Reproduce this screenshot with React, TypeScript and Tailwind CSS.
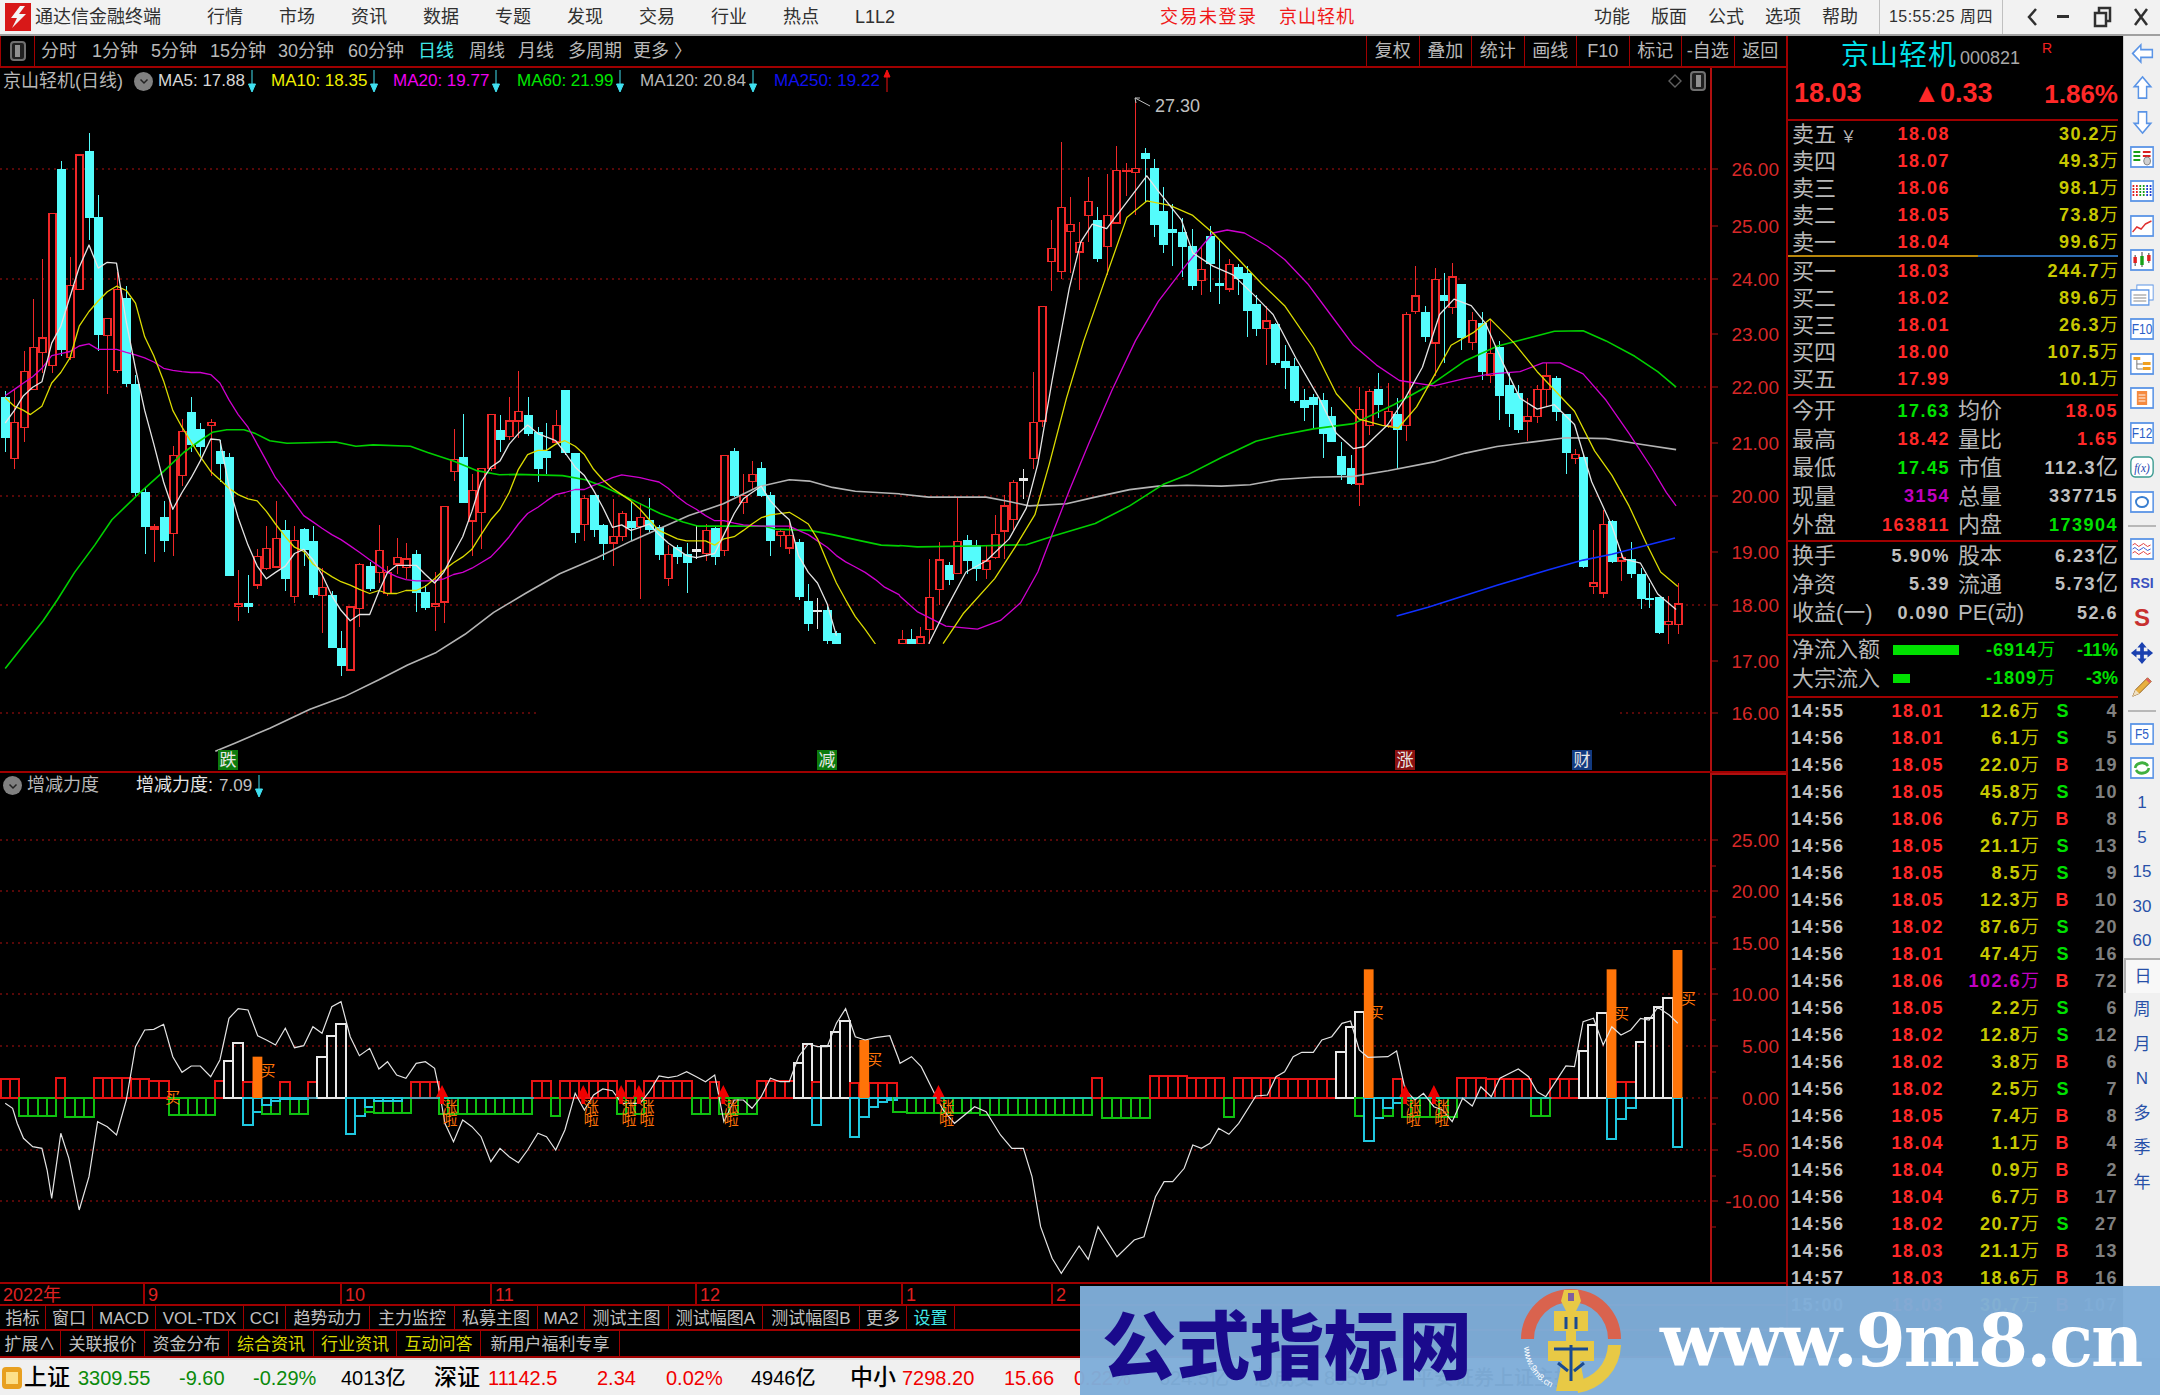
import React from 'react';

type Candle = [number, 'u' | 'd' | 'w', number, number, number, number];

// coordinates read off the left half of the chart
const candlesA: Candle[] = [
  [9,'d',645,660,755,790],[25,'u',640,718,805,830],[41,'u',550,597,730,765],[57,'u',425,540,640,640],[73,'u',330,518,552,600],
  [90,'u',222,222,583,600],[106,'d',97,118,545,560],[122,'u',325,393,565,570],[138,'u',83,83,402,402],[155,'d',32,75,232,285],
  [171,'d',178,232,510,550],[187,'u',470,472,512,650],[203,'u',360,403,595,600],[220,'d',395,425,625,635],[236,'d',605,628,885,895],
  [252,'d',875,885,965,1030],[268,'u',960,967,972,1050],[285,'d',905,945,998,1027],[301,'u',775,797,983,1035],[317,'u',710,740,845,870],
  [333,'d',657,695,770,790],[349,'d',720,735,775,800],[367,'u',710,718,726,845],[383,'d',760,788,815,860],[399,'d',792,803,1083,1083],
  [415,'u',1070,1150,1155,1190],[432,'d',1080,1148,1156,1172],[448,'u',1020,1038,1105,1115],[464,'u',965,1018,1065,1070],[480,'u',905,995,1062,1065],
  [497,'d',950,975,1090,1118],[513,'u',965,1000,1133,1148],[529,'d',970,973,1020,1060],[545,'d',965,1002,1127,1135],[561,'u',1065,1110,1130,1218],
  [578,'d',1120,1130,1252,1255],[594,'d',1215,1255,1297,1322],[610,'u',1155,1157,1307,1307],[626,'u',1052,1056,1160,1205],[644,'d',1050,1060,1112,1120],
  [660,'u',963,1022,1075,1100],[675,'u',1060,1075,1125,1130],[691,'u',993,1040,1055,1078],[707,'u',1005,1043,1063,1090],[725,'d',1022,1032,1122,1168],
  [741,'d',1105,1123,1158,1165],[757,'u',1075,1150,1155,1215],[773,'u',917,918,1145,1195],[790,'u',735,807,835,858],[806,'d',698,803,908,908],
  [822,'u',840,880,953,1035],[838,'u',828,828,933,1020],[855,'u',700,700,828,835],[871,'d',700,738,758,788],[887,'u',657,715,752,760],
  [903,'u',597,692,715,755],[919,'d',657,703,745,750],[937,'d',730,742,827,860],[952,'d',720,788,802,842],[968,'u',690,725,765,770],
  [984,'d',642,642,790,795],[1002,'d',793,793,980,1005],[1018,'u',890,900,962,1000],[1034,'d',890,892,972,990],[1050,'d',960,963,1005,1045],
  [1067,'u',900,990,1005,1060],[1083,'u',930,935,990,1000],[1099,'d',905,955,968,1000],[1115,'u',910,945,965,1137],[1131,'d',898,952,972,980],
  [1148,'d',962,968,1032,1045],[1164,'u',1010,1032,1090,1108],[1180,'d',1010,1016,1038,1055],[1196,'d',1005,1033,1050,1125],[1213,'w',965,1020,1024,1042],
  [1229,'u',960,975,1030,1048],[1245,'d',965,972,1037,1058],[1261,'u',795,797,1022,1037],[1279,'d',780,788,893,895],[1295,'u',840,892,908,935],
  [1310,'u',810,843,858,880],[1326,'d',813,828,893,895],[1342,'d',885,893,998,1037],[1359,'u',975,978,987,1015],[1375,'u',955,988,1017,1032],
  [1391,'d',995,1005,1133,1140],[1408,'d',1102,1145,1195,1215],[1424,'w',1135,1166,1168,1210],[1441,'d',1153,1165,1237,1245],[1457,'d',1215,1220,1245,1245],
];

// right half, different crop so different scale
const candlesB: Candle[] = [
  [3,'u',1228,1248,1258,1258],[19,'d',1225,1248,1258,1258],[35,'u',1220,1243,1258,1258],[51,'u',1065,1153,1226,1258],[68,'u',1028,1068,1135,1170],
  [85,'d',1072,1080,1112,1125],[100,'u',925,1025,1098,1100],[116,'d',1010,1024,1068,1100],[132,'d',1022,1035,1087,1115],[149,'u',1035,1070,1090,1110],
  [165,'u',965,1010,1062,1065],[181,'u',920,945,1002,1065],[197,'u',885,892,975,1000],[215,'w',860,884,886,930],[232,'u',640,755,838,860],
  [247,'u',492,492,752,765],[263,'u',295,360,390,457],[280,'u',118,267,412,430],[296,'u',242,305,322,415],[312,'u',300,347,368,455],
  [328,'u',198,254,285,345],[344,'d',265,297,383,390],[361,'u',190,285,355,420],[377,'u',127,182,302,305],[393,'u',165,182,186,240],
  [409,'u',22,178,188,285],[427,'d',132,144,156,255],[442,'d',157,178,306,335],[458,'d',220,277,350,370],[474,'d',260,318,323,400],
  [492,'d',290,325,355,425],[509,'d',315,355,445,455],[524,'u',355,408,433,465],[540,'d',310,333,395,460],[556,'d',340,440,445,487],
  [573,'u',385,397,452,460],[589,'d',395,403,428,465],[605,'d',400,418,500,562],[621,'d',465,488,542,560],[638,'u',490,525,542,625],
  [654,'d',530,533,618,625],[670,'d',580,618,630,680],[686,'d',610,628,705,710],[704,'d',680,706,722,752],[720,'d',690,700,715,770],
  [736,'d',688,705,780,835],[751,'d',720,742,798,800],[768,'d',800,834,873,887],[785,'d',830,860,893,897],[800,'u',675,725,895,945],
  [817,'u',680,685,762,783],[833,'d',642,680,715,745],[850,'u',665,730,762,768],[866,'d',700,737,770,860],[882,'u',505,510,762,797],
  [898,'u',400,468,503,510],[915,'d',490,505,560,573],[932,'u',405,430,575,650],[947,'d',415,467,478,620],[962,'u',393,425,495,510],
  [978,'d',440,443,562,590],[996,'u',505,523,573,590],[1013,'d',505,530,640,660],[1028,'u',520,598,648,665],[1044,'d',570,586,695,750],
  [1061,'d',640,672,735,765],[1077,'d',670,690,770,780],[1093,'u',700,742,752,797],[1109,'u',670,680,742,757],[1125,'u',620,650,680,720],
  [1143,'d',650,655,730,752],[1160,'d',735,737,823,872],[1175,'u',815,828,838,850],[1190,'d',830,836,1083,1085],[1208,'u',1000,1120,1128,1145],
  [1224,'u',955,987,1143,1155],[1240,'d',978,980,1070,1075],[1256,'u',1050,1062,1070,1115],[1273,'d',1028,1068,1098,1108],[1290,'d',1085,1100,1155,1180],
  [1305,'d',1120,1155,1158,1178],[1322,'d',1152,1153,1233,1237],[1338,'u',1150,1208,1215,1258],[1355,'u',1120,1168,1215,1237],
];

const ax = (x: number) => x / 1.742;
const ay = (y: number) => 120 + y / 2.376;
const bx = (x: number) => 900 + x / 1.742;
const by = (y: number) => 90 + y / 2.272;
const cy = (y: number) => 770 + y / 3;

const pts = (a: number[], fx: (n: number) => number, fy: (n: number) => number) => {
  const out: string[] = [];
  for (let i = 0; i < a.length; i += 2) out.push(`${fx(a[i]).toFixed(1)},${fy(a[i + 1]).toFixed(1)}`);
  return out.join(' ');
};

const ma5a = pts([9,720,25,690,41,655,57,635,73,622,90,530,106,490,122,420,138,350,155,297,171,352,187,338,203,340,220,480,236,590,252,690,268,770,285,860,301,925,317,885,333,850,349,810,367,758,383,760,399,870,415,945,432,1010,448,1060,464,1090,480,1075,497,1060,513,1030,529,1020,545,1045,561,1080,578,1130,594,1165,610,1190,626,1175,644,1175,660,1120,675,1075,691,1058,725,1058,741,1080,757,1100,773,1075,790,1030,806,990,822,930,838,860,855,825,871,810,887,770,903,745,919,725,937,745,968,762,984,790,1002,825,1018,845,1034,880,1050,920,1067,968,1083,962,1099,975,1115,968,1131,960,1148,985,1164,1005,1180,1020,1196,1035,1213,1040,1245,1030,1261,985,1279,935,1295,900,1310,885,1326,870,1342,905,1359,930,1375,950,1391,1035,1408,1075,1424,1100,1441,1150,1457,1225], ax, ay);
const ma5b = pts([50,1258,80,1180,115,1095,150,1070,190,1020,220,950,240,850,265,660,295,450,315,345,335,305,360,315,395,255,430,195,450,230,490,295,510,370,545,400,580,420,620,470,650,510,690,610,730,700,760,780,790,815,810,810,850,760,880,700,910,630,940,510,965,475,995,490,1020,530,1050,620,1080,700,1110,725,1140,715,1175,760,1205,890,1240,990,1260,1065,1290,1075,1320,1145,1352,1180], bx, by);

const ma10a = pts([9,660,25,680,41,690,53,700,73,680,90,625,106,600,122,565,138,490,155,455,171,430,187,408,203,395,220,405,236,435,252,515,268,560,285,620,301,690,317,730,333,765,349,800,367,835,383,855,399,875,415,890,432,900,448,905,464,930,480,960,497,990,513,1015,529,1025,545,1055,561,1070,578,1085,594,1097,610,1105,626,1115,644,1125,660,1118,675,1125,691,1125,707,1118,725,1118,741,1108,757,1090,773,1070,790,1052,806,1038,822,1020,838,985,855,950,871,925,887,885,903,830,919,795,937,785,952,785,968,770,984,762,1002,775,1018,795,1034,830,1050,855,1067,875,1083,890,1099,905,1115,925,1131,950,1148,975,1164,985,1180,995,1196,1000,1229,1000,1245,1010,1261,995,1279,990,1295,975,1310,960,1326,945,1342,938,1375,932,1391,945,1408,960,1424,995,1441,1050,1457,1100,1473,1140,1490,1180,1507,1210,1525,1245], ax, ay);
const ma10b = pts([75,1258,110,1190,165,1110,200,1040,235,965,260,850,290,700,320,570,360,420,395,290,430,252,470,262,510,285,545,325,590,385,630,440,670,490,720,585,760,690,800,748,840,762,868,768,900,720,930,650,960,580,1000,550,1028,520,1070,575,1110,640,1175,730,1210,820,1240,875,1270,945,1300,1030,1325,1095,1355,1128], bx, by);

const ma20 = pts([9,655,25,640,41,625,57,610,73,590,90,560,106,555,122,550,138,537,155,532,171,545,187,545,203,545,220,552,236,558,252,565,268,575,285,590,301,595,317,598,333,600,349,600,367,605,383,625,399,665,415,700,432,730,448,770,464,810,480,850,497,880,513,910,529,940,545,955,561,970,578,985,594,997,610,1012,626,1027,644,1045,660,1060,675,1075,691,1085,707,1092,725,1095,757,1095,773,1090,790,1080,806,1075,822,1065,838,1052,855,1038,871,1015,887,990,903,960,919,935,937,920,952,905,968,890,984,885,1002,878,1018,878,1034,868,1050,860,1067,850,1083,843,1115,850,1131,855,1148,860,1164,875,1180,895,1196,912,1213,925,1229,940,1245,952,1261,952,1279,958,1295,962,1326,965,1359,965,1375,965,1391,975,1408,985,1424,1000,1441,1015,1457,1035,1473,1050,1490,1062,1507,1075,1525,1092,1541,1110,1566,1128], ax, ay)
  + ' ' + pts([0,1150,30,1185,80,1218,135,1225,175,1205,210,1165,240,1095,265,1010,295,910,330,800,370,680,410,570,450,480,500,395,545,325,570,318,600,325,640,355,670,385,710,440,750,510,790,580,830,625,870,660,930,672,985,655,1030,645,1080,640,1120,620,1150,620,1190,645,1230,705,1270,780,1310,860,1335,915,1352,945], bx, by);

const ma60 = pts([9,1303,40,1250,75,1190,100,1140,130,1075,165,1010,195,950,240,890,285,835,320,790,345,765,370,742,395,736,425,736,445,745,470,762,500,768,585,765,620,775,650,772,715,775,745,790,790,810,830,833,870,843,900,842,980,845,1020,855,1050,870,1090,895,1120,915,1150,935,1190,955,1215,965,1330,965,1350,972,1410,975,1450,985,1500,1000,1535,1010,1566,1012], ax, ay)
  + ' ' + pts([0,1035,30,1038,130,1036,220,1033,270,1012,340,985,400,945,460,895,500,875,560,835,620,798,660,785,720,770,790,758,860,715,930,665,985,615,1040,582,1090,565,1140,548,1190,547,1230,570,1280,605,1320,640,1352,675], bx, by);

const ma120 = pts([375,1500,410,1480,470,1445,540,1400,600,1370,660,1330,710,1295,760,1265,810,1222,860,1170,915,1125,975,1078,1040,1040,1100,1000,1150,970,1200,940,1260,912,1320,872,1375,855,1410,858,1450,873,1490,882,1566,888], ax, ay)
  + ' ' + pts([0,918,50,925,150,925,190,935,225,945,290,940,340,925,400,908,450,900,500,898,560,900,610,897,660,885,720,880,790,878,850,865,930,845,985,825,1040,810,1100,800,1160,790,1230,792,1290,805,1352,817], bx, by);

const ma250 = pts([865,1195,920,1175,1040,1125,1130,1090,1190,1068,1240,1055,1350,1018], bx, by);

const powerLine = pts([9,1000,22,1015,30,1060,41,1105,57,1130,73,1135,82,1200,90,1285,106,1090,120,1165,138,1320,155,1220,170,1055,187,1070,203,1095,220,990,236,830,252,780,268,778,285,763,301,860,317,907,333,888,349,888,367,920,383,870,399,745,415,716,432,720,449,797,464,810,480,825,497,775,513,833,529,827,545,770,561,790,578,710,594,695,610,800,626,857,644,835,660,897,675,875,691,915,707,925,725,880,741,875,757,895,765,960,775,1060,790,1115,806,1050,822,1070,838,1100,855,1175,871,1135,887,1160,903,1178,919,1140,937,1090,952,1100,968,1140,984,1080,1002,970,1018,1020,1034,975,1050,957,1067,962,1083,1000,1099,1000,1115,1000,1131,965,1148,918,1164,923,1180,918,1196,905,1213,920,1229,935,1245,915,1261,1055,1279,990,1295,990,1310,1015,1326,980,1342,925,1359,935,1375,935,1391,860,1408,822,1424,830,1441,830,1457,760,1473,716,1490,800,1507,810,1525,803,1550,797,1566,870], ax, cy)
  + ' ' + pts([0,880,20,860,37,890,60,970,75,1020,95,1060,130,1010,150,1025,175,1095,195,1135,215,1135,230,1220,245,1370,265,1465,281,1510,312,1428,328,1468,345,1370,378,1460,408,1410,425,1400,445,1280,460,1235,475,1235,495,1195,510,1125,525,1135,540,1120,555,1075,573,1093,590,1060,620,978,640,975,655,920,670,905,685,860,700,847,720,847,735,810,752,800,770,760,785,753,800,840,815,862,850,860,865,843,880,960,897,990,912,970,930,1010,945,1020,962,1055,980,985,997,1008,1012,950,1030,980,1045,925,1077,897,1095,920,1110,965,1125,980,1160,888,1175,890,1190,755,1208,745,1225,825,1240,770,1256,795,1273,780,1290,745,1305,750,1320,712,1340,735,1355,760], bx, cy);

type Run = [number, number, number, string, number];
const RED = '#e81414';
const GRN = '#10c010';
const CYN = '#20c8e0';
const WHT = '#e8e8e8';
const ORG = '#ff7408';

// x0, x1, bar count, colour, far end of the bar
const barsA: Run[] = [
  [1,33,2,RED,928],[33,98,4,GRN,1038],[98,114,1,RED,923],[114,163,3,GRN,1040],[163,228,4,RED,923],[228,260,2,RED,928],[260,295,2,RED,932],
  [295,375,5,GRN,1035],[375,390,1,RED,932],[390,406,1,WHT,873],[406,423,1,WHT,820],[423,440,1,RED,937],[423,440,1,CYN,1065],
  [440,457,1,CYN,1025],[457,488,2,GRN,1033],[457,472,1,CYN,1005],[472,488,1,CYN,993],[488,505,1,RED,937],[488,505,1,CYN,988],[505,537,2,GRN,1033],[505,537,2,CYN,988],
  [537,553,1,RED,937],[553,570,1,WHT,860],[570,586,1,WHT,797],[586,603,1,WHT,762],[603,618,1,CYN,1092],[618,635,1,CYN,1037],[635,652,1,GRN,1027],[635,652,1,CYN,1010],
  [652,716,4,GRN,1028],[652,700,3,CYN,992],[716,765,3,RED,937],[765,927,10,GRN,1033],[927,960,2,RED,932],[960,976,1,GRN,1037],[976,1075,6,RED,932],
  [1075,1090,1,GRN,1033],[1090,1106,1,RED,932],[1106,1122,1,GRN,1033],[1122,1205,5,RED,932],[1205,1237,2,GRN,1033],[1237,1253,1,RED,937],[1253,1318,4,GRN,1033],
  [1318,1383,4,RED,932],[1383,1399,1,WHT,878],[1399,1415,1,WHT,822],[1415,1431,1,RED,937],[1415,1431,1,CYN,1065],[1431,1448,1,WHT,828],[1448,1464,1,WHT,785],[1464,1480,1,WHT,752],
  [1480,1497,1,RED,940],[1480,1497,1,CYN,1100],[1497,1514,1,CYN,1042],[1514,1530,1,RED,940],[1514,1530,1,CYN,1010],[1530,1546,1,RED,940],[1530,1546,1,CYN,997],[1546,1562,1,RED,940],[1546,1562,1,CYN,990],
];
const barsB: Run[] = [
  [-12,12,1,GRN,1025],[12,140,8,GRN,1028],[140,335,12,GRN,1035],[335,352,1,RED,923],[352,435,5,GRN,1045],[435,500,4,RED,918],[500,565,4,RED,923],[565,582,1,GRN,1042],
  [582,660,5,RED,923],[660,760,6,RED,928],[760,777,1,WHT,847],[777,793,1,WHT,770],[793,809,1,WHT,725],[793,809,1,GRN,1037],[808,825,1,CYN,1113],[825,841,1,CYN,1045],
  [841,858,1,GRN,1037],[841,858,1,CYN,1015],[858,875,1,RED,928],[858,875,1,CYN,1000],[875,970,6,GRN,1040],[970,1020,3,RED,923],[1020,1100,5,RED,928],[1100,1133,2,GRN,1038],
  [1133,1182,3,RED,928],[1182,1199,1,WHT,843],[1199,1215,1,WHT,765],[1215,1231,1,WHT,730],[1231,1248,1,CYN,1108],[1248,1265,1,RED,937],[1248,1265,1,CYN,1047],[1265,1282,1,RED,937],[1265,1282,1,CYN,1015],
  [1282,1298,1,WHT,815],[1298,1314,1,WHT,745],[1314,1330,1,WHT,712],[1330,1346,1,WHT,685],[1346,1363,1,CYN,1132],
];

const Runs = ({ runs, fx }: { runs: Run[]; fx: (n: number) => number }) => (
  <g fill="none" strokeWidth="2" shapeRendering="crispEdges">
    {runs.flatMap(([x0, x1, n, color, end], i) =>
      Array.from({ length: n }, (_, k) => {
        const left = fx(x0 + ((x1 - x0) / n) * k);
        const w = fx(x1) - fx(x0);
        const y = cy(end);
        const zero = cy(983);
        return <rect key={`${i}-${k}`} x={left} y={Math.min(y, zero)} width={w / n} height={Math.abs(zero - y)} stroke={color} />;
      }),
    )}
  </g>
);

const Candles = ({ data, fx, fy }: { data: Candle[]; fx: (n: number) => number; fy: (n: number) => number }) => (
  <g shapeRendering="crispEdges">
    {data.map(([x, kind, high, top, bottom, low], i) => {
      const px = Math.round(fx(x)) + 0.5;
      const color = kind === 'u' ? '#f02828' : kind === 'w' ? '#e8e8e8' : '#54fcfc';
      const bodyH = Math.max(fy(bottom) - fy(top), 1);
      return (
        <g key={i}>
          <line x1={px} x2={px} y1={fy(high)} y2={fy(top)} stroke={color} />
          <line x1={px} x2={px} y1={fy(bottom)} y2={fy(low)} stroke={color} />
          <rect
            x={px - 3.5}
            y={fy(top)}
            width={7}
            height={bodyH}
            fill={kind === 'u' ? '#000' : color}
            stroke={color}
            strokeWidth={1.2}
          />
        </g>
      );
    })}
  </g>
);

const MainChart = () => {
  const dotted = [169, 279, 387, 496, 605];
  const axis: [string, number][] = [
    ['26.00', 169], ['25.00', 226], ['24.00', 279], ['23.00', 334], ['22.00', 387], ['21.00', 443],
    ['20.00', 496], ['19.00', 552], ['18.00', 605], ['17.00', 661], ['16.00', 713],
  ];
  return (
    <svg viewBox="0 94 1786 677" className="block h-[677px] w-[1786px]">
      {dotted.map((y) => (
        <line key={y} x1="0" x2="1710" y1={y} y2={y} stroke="#b01010" strokeDasharray="2 4" />
      ))}
      <line x1="0" x2="537" y1="713" y2="713" stroke="#b01010" strokeDasharray="2 4" />
      <line x1="1620" x2="1710" y1="713" y2="713" stroke="#b01010" strokeDasharray="2 4" />
      <line x1="1711" x2="1711" y1="94" y2="771" stroke="#b01010" strokeWidth="2" />
      {axis.map(([t, y]) => (
        <g key={t}>
          <line x1="1711" x2="1718" y1={y} y2={y} stroke="#b01010" />
          <text x="1779" y={y + 7} textAnchor="end" fontSize="19" fill="#d82828" className="font-['Liberation_Sans',sans-serif]">{t}</text>
        </g>
      ))}
      <Candles data={candlesA} fx={ax} fy={ay} />
      <Candles data={candlesB} fx={bx} fy={by} />
      <g fill="none" strokeWidth="1.3" strokeLinejoin="round">
        <polyline points={ma120} stroke="#b4b4b4" strokeWidth="1.6" />
        <polyline points={ma60} stroke="#00d000" strokeWidth="1.6" />
        <polyline points={ma20} stroke="#d000d0" />
        <polyline points={ma10a} stroke="#dcdc00" />
        <polyline points={ma10b} stroke="#dcdc00" />
        <polyline points={ma5a} stroke="#e4e4e4" />
        <polyline points={ma5b} stroke="#e4e4e4" />
        <polyline points={ma250} stroke="#1030ff" strokeWidth="1.6" />
      </g>
      <rect x="830" y="644" width="113" height="100" fill="#000" />
      <path d="M1135 98 l15 8 M1135 98 l5 0 M1135 98 l1 5" stroke="#c0c0c0" fill="none" />
      <text x="1155" y="112" fontSize="18" fill="#c0c0c0" className="font-['Liberation_Sans',sans-serif]">27.30</text>
      {[['跌', 228, '#0c7a0c'], ['减', 827, '#0c7a0c'], ['涨', 1405, '#8a1010'], ['财', 1582, '#123a80']].map(([t, x, bg]) => (
        <g key={t as string}>
          <rect x={(x as number) - 10} y="750" width="20" height="20" fill={bg as string} />
          <text x={x as number} y="766" textAnchor="middle" fontSize="17" fill="#e8e8e8" className="font-['Noto_Sans_CJK_SC',sans-serif]">{t}</text>
        </g>
      ))}
    </svg>
  );
};

const SubChart = () => {
  const rows: [string, number][] = [
    ['25.00', 840], ['20.00', 891], ['15.00', 943], ['10.00', 994], ['5.00', 1046], ['0.00', 1098], ['-5.00', 1150], ['-10.00', 1201],
  ];
  const buy: [number, number][] = [[ax(299), cy(982)], [ax(465), cy(900)], [ax(1522), cy(868)], [bx(828), cy(725)], [bx(1255), cy(730)], [bx(1372), cy(685)]];
  const up = [ax(770), ax(1016), ax(1082), ax(1113), ax(1260), bx(67), bx(880), bx(930)];
  const solid = [
    [ax(440), ax(457), cy(860)], [ax(1497), ax(1514), cy(810)], [bx(808), bx(825), cy(598)], [bx(1231), bx(1248), cy(598)], [bx(1346), bx(1363), cy(540)],
  ];
  return (
    <svg viewBox="0 798 1786 484" className="block h-[484px] w-[1786px]">
      {rows.map(([t, y]) => (
        <g key={t}>
          <line x1="0" x2="1710" y1={y} y2={y} stroke="#b01010" strokeDasharray="2 4" />
          <line x1="1711" x2="1718" y1={y} y2={y} stroke="#b01010" />
          <line x1="1711" x2="1716" y1={y + 26} y2={y + 26} stroke="#b01010" />
          <text x="1779" y={y + 7} textAnchor="end" fontSize="19" fill="#d82828" className="font-['Liberation_Sans',sans-serif]">{t}</text>
        </g>
      ))}
      <line x1="1711" x2="1711" y1="798" y2="1282" stroke="#b01010" strokeWidth="2" />
      <Runs runs={barsA} fx={ax} />
      <Runs runs={barsB} fx={bx} />
      <line x1={ax(457)} x2={ax(553)} y1="1098" y2="1098" stroke={CYN} strokeWidth="1.5" />
      <line x1={ax(603)} x2={ax(930)} y1="1098" y2="1098" stroke={CYN} strokeWidth="1.5" />
      <line x1={bx(-12)} x2={bx(335)} y1="1098" y2="1098" stroke={CYN} strokeWidth="1.5" />
      <line x1={bx(875)} x2={bx(1135)} y1="1098" y2="1098" stroke={CYN} strokeWidth="1.5" />
      {solid.map(([x0, x1, y], i) => (
        <rect key={i} x={x0} y={y} width={x1 - x0} height={1098 - y} fill={ORG} />
      ))}
      <polyline points={powerLine} fill="none" stroke="#e4e4e4" strokeWidth="1.2" />
      {up.map((x) => (
        <polygon key={x} points={`${x},1085 ${x - 6},1097 ${x - 2},1097 ${x - 2},1104 ${x + 2},1104 ${x + 2},1097 ${x + 6},1097`} fill="#f00000" />
      ))}
      <g className="font-['Noto_Sans_CJK_SC',sans-serif]" fill={ORG} fontSize="15" textAnchor="middle">
        {buy.map(([x, y]) => (
          <text key={x} x={x + 1} y={y + 6}>买</text>
        ))}
        {up.map((x) => (
          <g key={x}>
            <text x={x + 8} y="1112">涨</text>
            <text x={x + 8} y="1125">啦</text>
          </g>
        ))}
      </g>
    </svg>
  );
};

const Arrow = ({ up }: { up?: boolean }) => (
  <svg viewBox="0 0 10 24" className="h-[24px] w-[10px]">
    {up ? (
      <path d="M5 23 V2 M2 8 L5 1 L8 8 Z" stroke="#f01010" fill="#f01010" strokeWidth="1" />
    ) : (
      <path d="M5 1 V22 M1.5 15 L5 23 L8.5 15 Z" stroke="#40e0f0" fill="#40e0f0" strokeWidth="1" />
    )}
  </svg>
);

const Chevron = () => (
  <span className="flex h-[19px] w-[19px] items-center justify-center rounded-full bg-[#808080]">
    <svg viewBox="0 0 10 10" className="h-[10px] w-[10px]">
      <path d="M1.5 3.5 L5 7 L8.5 3.5" stroke="#222" strokeWidth="1.5" fill="none" />
    </svg>
  </span>
);

const ToggleBox = () => (
  <span className="flex h-[20px] w-[16px] items-center justify-center rounded-sm border-2 border-[#707070] bg-[#202020]">
    <span className="h-[12px] w-[5px] bg-[#909090]" />
  </span>
);

const topMenu = ['行情', '市场', '资讯', '数据', '专题', '发现', '交易', '行业', '热点', 'L1L2'];
const topRight = ['功能', '版面', '公式', '选项', '帮助'];

const TitleBar = () => (
  <div className="flex h-[36px] shrink-0 items-center border-b-2 border-[#a0a0a0] bg-[#f2f2f2] text-[18px] text-[#303030]">
    <svg viewBox="0 0 26 28" className="ml-[5px] h-[28px] w-[26px] shrink-0">
      <rect width="26" height="28" fill="#d81818" />
      <path d="M15 3 L6 15 L12 15 L7 25 L21 11 L14 11 L20 3 Z" fill="#f4f4f4" />
    </svg>
    <span className="ml-[4px] w-[172px] shrink-0">通达信金融终端</span>
    {topMenu.map((m) => (
      <span key={m} className="w-[72px] shrink-0">{m}</span>
    ))}
    <span className="ml-[233px] w-[119px] shrink-0 tracking-[1.5px] text-[#f01818]">交易未登录</span>
    <span className="w-[76px] shrink-0 tracking-[1px] text-[#f01818]">京山轻机</span>
    <span className="w-[239px] shrink-0" />
    {topRight.map((m) => (
      <span key={m} className="w-[57px] shrink-0">{m}</span>
    ))}
    <div className="flex h-full w-[124px] shrink-0 items-center justify-center border-x border-[#c0c0c0] text-[16px] tracking-[0.5px]">
      15:55:25 周四
    </div>
    <svg viewBox="0 0 158 34" className="h-[34px] w-[158px] shrink-0">
      <path d="M33 9 L26 17 L33 25" stroke="#303030" strokeWidth="2.5" fill="none" />
      <rect x="54" y="15" width="12" height="3" fill="#303030" />
      <path d="M92 13 H103 V26 H92 Z M96 13 V8 H107 V21 H103" stroke="#303030" strokeWidth="2.5" fill="none" />
      <path d="M132 9 L144 25 M144 9 L132 25" stroke="#303030" strokeWidth="2.5" />
    </svg>
  </div>
);

const periods = [
  { t: '分时', w: 'w-[51px]' }, { t: '1分钟', w: 'w-[59px]' }, { t: '5分钟', w: 'w-[59px]' }, { t: '15分钟', w: 'w-[68px]' }, { t: '30分钟', w: 'w-[70px]' },
  { t: '60分钟', w: 'w-[70px]' }, { t: '日线', w: 'w-[51px]', on: true }, { t: '周线', w: 'w-[49px]' }, { t: '月线', w: 'w-[50px]' }, { t: '多周期', w: 'w-[65px]' }, { t: '更多 〉', w: 'w-[60px]' },
];
const chartTools = ['复权', '叠加', '统计', '画线', 'F10', '标记', '-自选', '返回'];

const PeriodBar = () => (
  <div className="flex h-[32px] shrink-0 items-center border-b-2 border-[#a00000] text-[18px] text-[#b8b8b8]">
    <div className="flex h-full w-[35px] shrink-0 items-center justify-center border-x border-[#a00000]">
      <ToggleBox />
    </div>
    <div className="ml-[6px] flex">
      {periods.map((p) => (
        <span key={p.t} className={`${p.w} shrink-0 whitespace-nowrap ${p.on ? 'text-[#40e8e8]' : ''}`}>{p.t}</span>
      ))}
    </div>
    <div className="ml-auto flex h-full">
      {chartTools.map((t) => (
        <span key={t} className="flex h-full w-[52.5px] items-center justify-center border-l border-[#a00000]">{t}</span>
      ))}
    </div>
  </div>
);

const maItems = [
  { t: 'MA5: 17.88', c: 'text-[#d8d8d8]', w: 'w-[113px]' },
  { t: 'MA10: 18.35', c: 'text-[#f0f000]', w: 'w-[122px]' },
  { t: 'MA20: 19.77', c: 'text-[#f000f0]', w: 'w-[124px]' },
  { t: 'MA60: 21.99', c: 'text-[#00e800]', w: 'w-[123px]' },
  { t: 'MA120: 20.84', c: 'text-[#b8b8b8]', w: 'w-[134px]' },
  { t: 'MA250: 19.22', c: 'text-[#1010f0]', w: 'w-[124px]', up: true },
];

const InfoBar = () => (
  <div className="flex h-[26px] w-[1712px] shrink-0 items-center border-r-2 border-[#b01010] text-[17px] text-[#b8b8b8]">
    <span className="ml-[3px] w-[131px] shrink-0 text-[18px]">京山轻机(日线)</span>
    <Chevron />
    <div className="ml-[5px] flex">
      {maItems.map((m) => (
        <span key={m.t} className={`flex ${m.w} shrink-0 items-center gap-[2px] whitespace-nowrap ${m.c}`}>
          {m.t}
          <Arrow up={m.up} />
        </span>
      ))}
    </div>
    <div className="ml-auto flex items-center gap-[8px] pr-[4px]">
      <svg viewBox="0 0 14 14" className="h-[14px] w-[14px]">
        <path d="M7 1 L13 7 L7 13 L1 7 Z" stroke="#606060" fill="none" strokeWidth="1.4" />
      </svg>
      <ToggleBox />
    </div>
  </div>
);

const SubHeader = () => (
  <div className="flex h-[25px] shrink-0 items-center text-[18px]">
    <span className="ml-[3px]"><Chevron /></span>
    <span className="ml-[5px] w-[109px] shrink-0 text-[#b8b8b8]">增减力度</span>
    <span className="flex items-center gap-[2px] whitespace-nowrap text-[#e4e4e4]">
      增减力度:<span className="ml-[4px] text-[17px] text-[#c0c0c0]">7.09</span>
      <Arrow />
    </span>
    <span className="ml-auto h-full w-[76px] border-l-2 border-t-2 border-[#b01010]" />
  </div>
);

const months = [
  { t: '2022年', w: 'w-[143px]' }, { t: '9', w: 'w-[197px]' }, { t: '10', w: 'w-[150px]' }, { t: '11', w: 'w-[205px]' },
  { t: '12', w: 'w-[206px]' }, { t: '1', w: 'w-[150px]' }, { t: '2', w: 'w-[735px]' },
];

const DateRow = () => (
  <div className="flex h-[24px] shrink-0 border-y-2 border-[#a00000] text-[18px] leading-[23px] text-[#e02020]">
    {months.map((m, i) => (
      <span key={m.t} className={`${m.w} shrink-0 pl-[3px] ${i > 0 ? 'border-l-2 border-[#a00000]' : ''}`}>{m.t}</span>
    ))}
  </div>
);

const tabsA = [
  { t: '指标', w: 'w-[46px]' }, { t: '窗口', w: 'w-[47px]' }, { t: 'MACD', w: 'w-[63px]' }, { t: 'VOL-TDX', w: 'w-[88px]' }, { t: 'CCI', w: 'w-[42px]' },
  { t: '趋势动力', w: 'w-[84px]' }, { t: '主力监控', w: 'w-[85px]' }, { t: '私募主图', w: 'w-[83px]' }, { t: 'MA2', w: 'w-[47px]' }, { t: '测试主图', w: 'w-[84px]' },
  { t: '测试幅图A', w: 'w-[94px]' }, { t: '测试幅图B', w: 'w-[97px]' }, { t: '更多', w: 'w-[47px]' }, { t: '设置', w: 'w-[48px]', c: 'text-[#40e8e8]' },
];
const tabsB = [
  { t: '扩展∧', w: 'w-[61px]' }, { t: '关联报价', w: 'w-[84px]' }, { t: '资金分布', w: 'w-[84px]' }, { t: '综合资讯', w: 'w-[85px]', c: 'text-[#d8d800]' },
  { t: '行业资讯', w: 'w-[83px]', c: 'text-[#d8d800]' }, { t: '互动问答', w: 'w-[84px]', c: 'text-[#d8d800]' }, { t: '新用户福利专享', w: 'w-[139px]' },
];

const TabRow = ({ tabs, h }: { tabs: { t: string; w: string; c?: string }[]; h: string }) => (
  <div className={`flex ${h} shrink-0 border-b-2 border-[#a00000] text-[17px] text-[#c0c0c0]`}>
    {tabs.map((t) => (
      <span key={t.t} className={`flex ${t.w} shrink-0 items-center justify-center whitespace-nowrap border-r border-[#a00000] pt-[2px] ${t.c ?? ''}`}>{t.t}</span>
    ))}
  </div>
);

const RED_T = 'text-[#ff2828]';
const GRN_T = 'text-[#00e000]';
const GRY_T = 'text-[#c0c0c0]';

const Vol = ({ v, c = 'text-[#c8c800]' }: { v: string; c?: string }) => (
  <span className={`font-bold tracking-[1.5px] ${c}`}>
    {v}
    <span className="font-normal tracking-normal">万</span>
  </span>
);

const BookRow = ({ label, price, vol, extra }: { label: string; price: string; vol: string; extra?: boolean }) => (
  <div className="flex h-[27px] shrink-0 items-center">
    <span className="w-[70px] shrink-0 whitespace-nowrap pl-[4px] text-[22px] leading-none text-[#b8b8b8]">
      {label}
      {extra && <span className="text-[16px]"> ￥</span>}
    </span>
    <span className={`w-[92px] shrink-0 text-right font-bold tracking-[1.5px] ${RED_T}`}>{price}</span>
    <span className="flex-1 text-right"><Vol v={vol} /></span>
  </div>
);

const sells = [['卖五', '18.08', '30.2'], ['卖四', '18.07', '49.3'], ['卖三', '18.06', '98.1'], ['卖二', '18.05', '73.8'], ['卖一', '18.04', '99.6']];
const buys = [['买一', '18.03', '244.7'], ['买二', '18.02', '89.6'], ['买三', '18.01', '26.3'], ['买四', '18.00', '107.5'], ['买五', '17.99', '10.1']];

const StatRow = ({ a, av, ac, b, bv, bc, h = 'h-[28.5px]' }: { a: string; av: string; ac: string; b: string; bv: React.ReactNode; bc: string; h?: string }) => (
  <div className={`flex ${h} shrink-0 items-center`}>
    <span className="w-[60px] shrink-0 whitespace-nowrap pl-[4px] text-[22px] leading-none text-[#b8b8b8]">{a}</span>
    <span className={`w-[102px] shrink-0 text-right font-bold tracking-[1.5px] ${ac}`}>{av}</span>
    <span className="ml-[8px] w-[64px] shrink-0 whitespace-nowrap text-[22px] leading-none text-[#b8b8b8]">{b}</span>
    <span className={`flex-1 text-right font-bold tracking-[1.5px] ${bc}`}>{bv}</span>
  </div>
);

const Yi = ({ v }: { v: string }) => (
  <>
    {v}
    <span className="text-[22px] font-normal leading-none tracking-normal">亿</span>
  </>
);

const ticks: [string, string, string, string, string][] = [
  ['14:55', '18.01', '12.6', 'S', '4'], ['14:56', '18.01', '6.1', 'S', '5'], ['14:56', '18.05', '22.0', 'B', '19'], ['14:56', '18.05', '45.8', 'S', '10'],
  ['14:56', '18.06', '6.7', 'B', '8'], ['14:56', '18.05', '21.1', 'S', '13'], ['14:56', '18.05', '8.5', 'S', '9'], ['14:56', '18.05', '12.3', 'B', '10'],
  ['14:56', '18.02', '87.6', 'S', '20'], ['14:56', '18.01', '47.4', 'S', '16'], ['14:56', '18.06', '102.6', 'B', '72'], ['14:56', '18.05', '2.2', 'S', '6'],
  ['14:56', '18.02', '12.8', 'S', '12'], ['14:56', '18.02', '3.8', 'B', '6'], ['14:56', '18.02', '2.5', 'S', '7'], ['14:56', '18.05', '7.4', 'B', '8'],
  ['14:56', '18.04', '1.1', 'B', '4'], ['14:56', '18.04', '0.9', 'B', '2'], ['14:56', '18.04', '6.7', 'B', '17'], ['14:56', '18.02', '20.7', 'S', '27'],
  ['14:56', '18.03', '21.1', 'B', '13'], ['14:57', '18.03', '18.6', 'B', '16'], ['15:00', '18.03', '30.7', 'B', '107'],
];

const TickRow = ({ row }: { row: [string, string, string, string, string] }) => {
  const [time, price, vol, side, n] = row;
  const purple = parseFloat(vol) > 100;
  return (
    <div className="flex h-[27px] shrink-0 items-center font-bold tracking-[1.5px]">
      <span className={`w-[78px] shrink-0 pl-[3px] ${GRY_T}`}>{time}</span>
      <span className={`w-[78px] shrink-0 text-right ${RED_T}`}>{price}</span>
      <span className="w-[95px] shrink-0 text-right"><Vol v={vol} c={purple ? 'text-[#c000c0]' : 'text-[#c8c800]'} /></span>
      <span className={`w-[31px] shrink-0 text-right ${side === 'B' ? RED_T : GRN_T}`}>{side}</span>
      <span className="flex-1 text-right text-[#808080]">{n}</span>
    </div>
  );
};

const QuotePanel = () => (
  <div className="flex w-[337px] shrink-0 flex-col overflow-hidden border-l-2 border-[#a00000] bg-black pr-[5px] font-['Liberation_Sans','Noto_Sans_CJK_SC',sans-serif] text-[18px]">
    <div className="h-[85px] shrink-0 border-b-2 border-[#a00000]">
      <div className="flex h-[39px] items-center">
        <span className="ml-[53px] text-[28px] leading-none tracking-[1px] text-[#00e0e8]">京山轻机</span>
        <span className="ml-[3px] mt-[6px] text-[18px] text-[#a8a8a8]">000821</span>
        <span className="mb-[14px] ml-[22px] text-[14px] text-[#f02020]">R</span>
      </div>
      <div className="mt-[5px] flex items-center justify-between pl-[6px] text-[27px] font-bold leading-none text-[#ff2828]">
        <span>18.03</span>
        <span>▲0.33</span>
        <span className="text-[26px]">1.86%</span>
      </div>
    </div>
    <div className="h-[134px] shrink-0">
      {sells.map(([l, p, v], i) => (
        <BookRow key={l} label={l} price={p} vol={v} extra={i === 0} />
      ))}
    </div>
    <div className="flex h-[2px] shrink-0">
      <span className="w-[190px] bg-[#b8860b]" />
      <span className="flex-1 bg-[#2a6ab0]" />
    </div>
    <div className="mt-[1px] h-[138px] shrink-0 border-b-2 border-[#a00000]">
      {buys.map(([l, p, v]) => (
        <BookRow key={l} label={l} price={p} vol={v} />
      ))}
    </div>
    <div className="h-[146px] shrink-0 border-b-2 border-[#a00000] pt-[1px]">
      <StatRow a="今开" av="17.63" ac={GRN_T} b="均价" bv="18.05" bc={RED_T} />
      <StatRow a="最高" av="18.42" ac={RED_T} b="量比" bv="1.65" bc={RED_T} />
      <StatRow a="最低" av="17.45" ac={GRN_T} b="市值" bv={<Yi v="112.3" />} bc={GRY_T} />
      <StatRow a="现量" av="3154" ac="text-[#c000c0]" b="总量" bv="337715" bc={GRY_T} />
      <StatRow a="外盘" av="163811" ac={RED_T} b="内盘" bv="173904" bc={GRN_T} />
    </div>
    <div className="h-[94px] shrink-0 border-b-2 border-[#a00000]">
      <StatRow a="换手" av="5.90%" ac={GRY_T} b="股本" bv={<Yi v="6.23" />} bc={GRY_T} />
      <StatRow a="净资" av="5.39" ac={GRY_T} b="流通" bv={<Yi v="5.73" />} bc={GRY_T} />
      <StatRow a="收益(一)" av="0.090" ac={GRY_T} b="PE(动)" bv="52.6" bc={GRY_T} />
    </div>
    <div className="flex h-[62px] shrink-0 flex-col border-b-2 border-[#a00000] text-[#00e000]">
      <div className="flex h-[28.5px] items-center">
        <span className="w-[105px] shrink-0 whitespace-nowrap pl-[4px] text-[22px] leading-none text-[#b8b8b8]">净流入额</span>
        <span className="h-[10px] w-[66px] bg-[#00e000]" />
        <span className="ml-auto font-bold tracking-[1px]">-6914<span className="font-normal">万</span></span>
        <span className="w-[62px] text-right font-bold">-11%</span>
      </div>
      <div className="flex h-[28.5px] items-center">
        <span className="w-[105px] shrink-0 whitespace-nowrap pl-[4px] text-[22px] leading-none text-[#b8b8b8]">大宗流入</span>
        <span className="h-[9px] w-[17px] bg-[#00e000]" />
        <span className="ml-auto font-bold tracking-[1px]">-1809<span className="font-normal">万</span></span>
        <span className="w-[62px] text-right font-bold">-3%</span>
      </div>
    </div>
    <div className="flex flex-col">
      {ticks.map((r, i) => (
        <TickRow key={i} row={r} />
      ))}
    </div>
  </div>
);

const Frame = ({ children }: { children?: React.ReactNode }) => (
  <svg viewBox="0 0 28 22" preserveAspectRatio="none" className="h-[22px] w-[24px]">
    <rect x="1" y="1" width="26" height="20" fill="#fff" stroke="#5a94e6" strokeWidth="1.8" />
    {children}
  </svg>
);

const NavArrow = ({ d }: { d: string }) => (
  <svg viewBox="0 0 28 26" preserveAspectRatio="none" className="h-[25px] w-[23px]">
    <path d={d} fill="#fff" stroke="#5a94e6" strokeWidth="1.8" />
  </svg>
);

const FrameText = ({ t, c = '#2a60c8' }: { t: string; c?: string }) => (
  <Frame>
    <text x="14" y="16" textAnchor="middle" fontSize="14" fill={c} className="font-['Liberation_Sans',sans-serif]">{t}</text>
  </Frame>
);

const sideIcons: React.ReactNode[] = [
  <NavArrow key="l" d="M2 13 L12 4 V9 H26 V17 H12 V22 Z" />,
  <NavArrow key="u" d="M14 2 L24 12 H19 V24 H9 V12 H4 Z" />,
  <NavArrow key="d" d="M14 24 L24 14 H19 V2 H9 V14 H4 Z" />,
  <Frame key="a">
    <path d="M4 6 H12 M4 10 H12 M4 14 H12" stroke="#18a018" strokeWidth="2" />
    <path d="M15 6 H24 M15 10 H24" stroke="#d82020" strokeWidth="2" />
    <circle cx="20" cy="15" r="4" fill="#d0d0d0" stroke="#808080" />
  </Frame>,
  <Frame key="b">
    <path d="M4 5 V17 M8 5 V17" stroke="#e02020" strokeWidth="2" strokeDasharray="2 1" />
    <path d="M12 5 V17 M16 5 V17" stroke="#18a018" strokeWidth="2" strokeDasharray="2 1" />
    <path d="M20 5 V17 M24 5 V17" stroke="#2040d0" strokeWidth="2" strokeDasharray="2 1" />
  </Frame>,
  <Frame key="c">
    <path d="M3 17 L8 12 L13 14 L18 9 L25 6" stroke="#e03030" strokeWidth="1.6" fill="none" />
  </Frame>,
  <Frame key="e">
    <path d="M6 6 V17 M14 3 V18 M22 4 V14" stroke="#303030" />
    <rect x="4" y="8" width="4" height="6" fill="#e02020" />
    <rect x="12" y="7" width="4" height="9" fill="#18a018" />
    <rect x="20" y="6" width="4" height="6" fill="#e02020" />
  </Frame>,
  <svg key="f" viewBox="0 0 28 22" preserveAspectRatio="none" className="h-[22px] w-[24px]">
    <rect x="8" y="1" width="19" height="15" fill="#fff" stroke="#5a94e6" />
    <rect x="1" y="6" width="21" height="15" fill="#fff" stroke="#5a94e6" strokeWidth="1.4" />
    <path d="M4 11 H19 M4 14 H19 M4 17 H19" stroke="#808080" />
  </svg>,
  <FrameText key="g" t="F10" />,
  <Frame key="h">
    <path d="M8 7 V16 H15 M8 11 H15" stroke="#707070" fill="none" />
    <rect x="4" y="4" width="8" height="3" fill="#f0a020" />
    <rect x="15" y="9" width="9" height="3" fill="#f0a020" />
    <rect x="15" y="14" width="9" height="3" fill="#f0a020" />
  </Frame>,
  <Frame key="i">
    <rect x="8" y="4" width="12" height="14" fill="#f58a40" />
    <path d="M10 8 H18 M10 11 H18 M10 14 H18" stroke="#fff" />
  </Frame>,
  <FrameText key="j" t="F12" />,
  <svg key="k" viewBox="0 0 28 22" preserveAspectRatio="none" className="h-[22px] w-[24px]">
    <rect x="1" y="1" width="26" height="20" rx="5" fill="#fff" stroke="#3a9a90" strokeWidth="1.6" />
    <text x="14" y="16" textAnchor="middle" fontSize="13" fontStyle="italic" fill="#1a3fb0" className="font-['Liberation_Serif',serif]">f(x)</text>
  </svg>,
  <Frame key="m">
    <ellipse cx="14" cy="11" rx="7" ry="5" fill="none" stroke="#3a7fd0" strokeWidth="2.2" />
  </Frame>,
  'sep',
  <Frame key="n">
    <path d="M3 7 q3 -3 5 0 t5 0 t5 0 t6 0" stroke="#e03030" fill="none" />
    <path d="M3 11 q3 -3 5 0 t5 0 t5 0 t6 0" stroke="#2a50d0" fill="none" />
    <path d="M3 15 q3 -3 5 0 t5 0 t5 0 t6 0" stroke="#e03030" fill="none" />
  </Frame>,
  <span key="o" className="font-['Liberation_Sans',sans-serif] text-[14px] font-bold text-[#3a50c0]">RSI</span>,
  <span key="p" className="font-['Liberation_Sans',sans-serif] text-[24px] font-bold leading-none text-[#c83030]">S</span>,
  <svg key="q" viewBox="0 0 26 26" className="h-[24px] w-[24px]">
    <path d="M13 1 L18 7 H15 V11 H19 V8 L25 13 L19 18 V15 H15 V19 H18 L13 25 L8 19 H11 V15 H7 V18 L1 13 L7 8 V11 H11 V7 H8 Z" fill="#1a40b0" />
  </svg>,
  <svg key="r" viewBox="0 0 26 26" className="h-[24px] w-[24px]">
    <path d="M3 23 L6 16 L19 3 L23 7 L10 20 Z" fill="#e8b040" stroke="#906020" />
    <path d="M19 3 L23 7 L21 9 L17 5 Z" fill="#e06060" />
    <path d="M3 23 L6 16 L10 20 Z" fill="#f0e0c0" />
  </svg>,
  'sep2',
  <FrameText key="s" t="F5" />,
  <Frame key="t">
    <path d="M6 11 a8 6 0 0 1 15 -2 M22 11 a8 6 0 0 1 -15 2" stroke="#40b040" strokeWidth="3" fill="none" />
  </Frame>,
];

const sideLabels = ['1', '5', '15', '30', '60', '日', '周', '月', 'N', '多', '季', '年'];

const SideBar = () => (
  <div className="flex w-[37px] shrink-0 flex-col items-center border-l border-[#d0d0d0] bg-[#f0f0f0] font-['Liberation_Sans','Noto_Sans_CJK_SC',sans-serif]">
    {sideIcons.map((icon, i) =>
      icon === 'sep' || icon === 'sep2' ? (
        <span key={i} className={`h-[2px] w-[28px] shrink-0 bg-[#b8b8b8] ${icon === 'sep' ? 'mb-[5px] mt-[6px]' : 'mb-[5px] mt-[5px]'}`} />
      ) : (
        <span key={i} className="flex h-[34.5px] w-full shrink-0 items-center justify-center">{icon}</span>
      ),
    )}
    {sideLabels.map((l) => (
      <span
        key={l}
        className={`flex h-[34.5px] w-full shrink-0 items-center justify-center text-[17px] text-[#2850a8] ${l === '日' ? 'border-l-2 border-t-2 border-[#b0b0b0] bg-[#f8f8f8]' : ''}`}
      >
        {l}
      </span>
    ))}
  </div>
);

const statusItems = [
  { t: '上证', c: 'text-black text-[23px]', w: 'w-[54px]' }, { t: '3309.55', c: 'text-[#0a8a0a]', w: 'w-[101px]' }, { t: '-9.60', c: 'text-[#0a8a0a]', w: 'w-[74px]' }, { t: '-0.29%', c: 'text-[#0a8a0a]', w: 'w-[88px]' },
  { t: '4013亿', c: 'text-black', w: 'w-[93px]' }, { t: '深证', c: 'text-black text-[23px]', w: 'w-[54px]' }, { t: '11142.5', c: 'text-[#f00000]', w: 'w-[109px]' }, { t: '2.34', c: 'text-[#f00000]', w: 'w-[69px]' },
  { t: '0.02%', c: 'text-[#f00000]', w: 'w-[85px]' }, { t: '4946亿', c: 'text-black', w: 'w-[99px]' }, { t: '中小', c: 'text-black text-[23px]', w: 'w-[52px]' }, { t: '7298.20', c: 'text-[#f00000]', w: 'w-[102px]' },
  { t: '15.66', c: 'text-[#f00000]', w: 'w-[70px]' }, { t: '0.22%', c: 'text-[#f00000]', w: 'w-[85px]' }, { t: '624.5亿', c: 'text-black', w: 'w-[95px]' }, { t: '总成交', c: 'text-black', w: 'w-[70px]' }, { t: '8959亿', c: 'text-black', w: 'w-[90px]' }, { t: '平安证券上证主指', c: 'text-black', w: 'w-[200px]' },
];

const StatusBar = () => (
  <div className="flex h-[37px] shrink-0 items-center border-t-2 border-[#e0e0e0] bg-[#f0f0f0] pl-[2px] font-['Liberation_Sans','Noto_Sans_CJK_SC',sans-serif] text-[20px] font-medium">
    <span className="mr-[2px] flex h-[22px] w-[20px] shrink-0 items-center justify-center rounded-sm bg-[#e8a020]">
      <span className="h-[12px] w-[12px] bg-[#fde08a]" />
    </span>
    {statusItems.map((s) => (
      <span key={s.t} className={`${s.w} shrink-0 whitespace-nowrap ${s.c}`}>{s.t}</span>
    ))}
  </div>
);

const WatermarkLogo = () => (
  <svg viewBox="0 0 110 108" className="h-[108px] w-[110px] shrink-0">
    <path d="M5 52 A50 50 0 0 1 105 52 L92 52 A37 37 0 0 0 18 52 Z" fill="#d9634e" />
    <path d="M105 58 A50 50 0 0 1 62 106 L60 94 A38 38 0 0 0 92 58 Z" fill="#e8c945" />
    <path id="wm-arc" d="M8 60 A47 47 0 0 0 45 104" fill="none" />
    <text fontSize="9" fill="#fff" className="font-['Liberation_Sans',sans-serif]">
      <textPath href="#wm-arc">www.9m8.cn</textPath>
    </text>
    <path d="M48 3 H62 L65 14 L60 24 H72 V44 H60 V54 H78 V74 H64 L70 104 H40 L46 74 H32 V54 H50 V44 H38 V24 H50 L45 14 Z" fill="#e8c945" />
    <rect x="52" y="6" width="6" height="8" fill="#7f5fa0" />
    <path d="M38 62 H72 M55 58 V94 M42 76 L52 84 M68 76 L58 84" stroke="#1a4a90" strokeWidth="3" fill="none" />
    <path d="M50 30 V42 M60 30 V42" stroke="#1a4a90" strokeWidth="3" />
  </svg>
);

const Watermark = () => (
  <div className="absolute bottom-0 left-[1080px] right-0 top-[1286px] flex items-center bg-[#7fadd9]/97">
    <span className="ml-[22px] w-[376px] shrink-0 whitespace-nowrap font-['Noto_Sans_CJK_SC',sans-serif] text-[74px] font-black leading-none text-[#1a0a8c]">公式指标网</span>
    <span className="ml-[38px] shrink-0"><WatermarkLogo /></span>
    <span className="ml-[34px] whitespace-nowrap font-['DejaVu_Serif',serif] text-[72px] font-bold leading-none tracking-[-2px] text-white">www.9m8.cn</span>
  </div>
);

export default function App() {
  return (
    <div className="relative flex h-[1395px] w-[2160px] flex-col overflow-hidden bg-black font-['Liberation_Sans','Noto_Sans_CJK_SC',sans-serif]">
      <TitleBar />
      <div className="flex min-h-0 flex-1">
        <div className="flex w-[1786px] shrink-0 flex-col">
          <PeriodBar />
          <InfoBar />
          <MainChart />
          <div className="h-[2px] shrink-0 bg-[#a00000]" />
          <SubHeader />
          <SubChart />
          <DateRow />
          <TabRow tabs={tabsA} h="h-[25px]" />
          <TabRow tabs={tabsB} h="h-[27px]" />
        </div>
        <QuotePanel />
        <SideBar />
      </div>
      <StatusBar />
      <Watermark />
    </div>
  );
}
